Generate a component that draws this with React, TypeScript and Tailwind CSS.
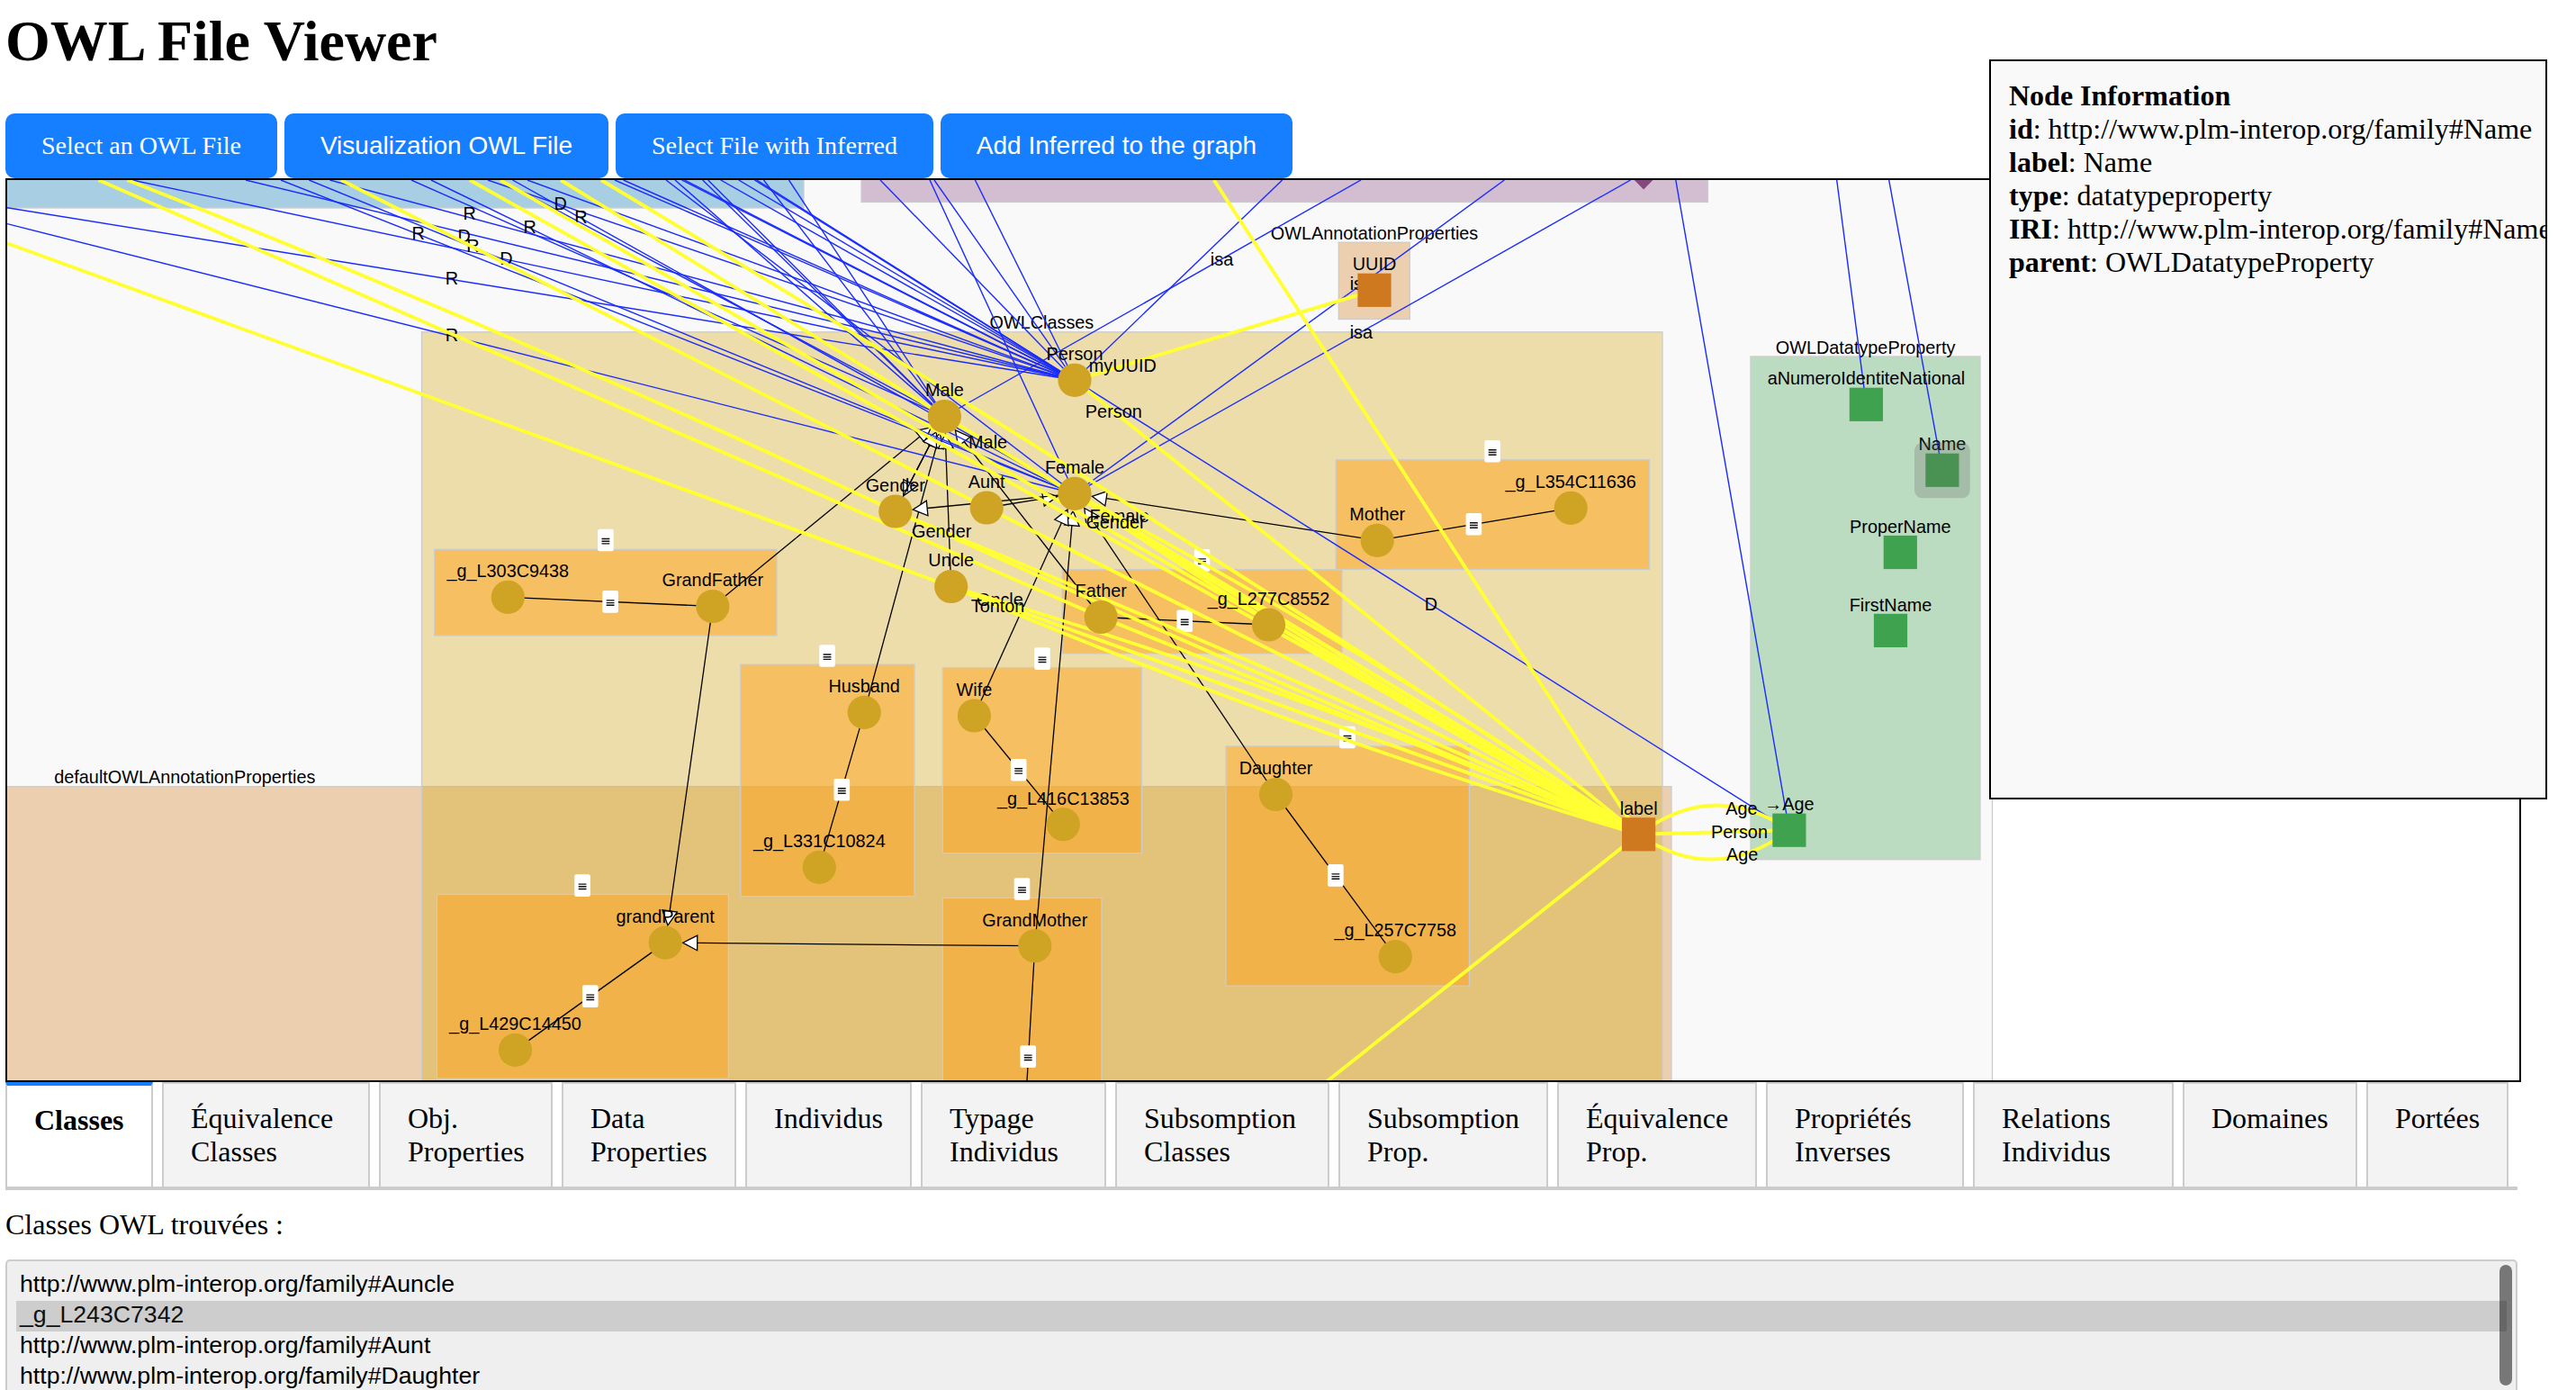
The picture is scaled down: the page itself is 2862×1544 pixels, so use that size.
import React from "react";

type P = [number, number];

const GOLD = "#cfa425";
const ORANGE = "#ce7820";
const GREEN = "#3fa24e";
const BLUE = "#1a2bff";
const YELLOW = "#ffff33";

const N: Record<string, P> = {
  g303: [564.3, 663.3],
  grandFather: [791.8, 673.5],
  person: [1194, 422.3],
  male: [1049.4, 462.5],
  female: [1194, 548.3],
  gender: [994.8, 568],
  aunt: [1096.2, 564],
  uncle: [1056.7, 651.5],
  father: [1223.2, 685.5],
  g277: [1409.5, 694],
  mother: [1530.2, 600.3],
  g354: [1745.2, 564.3],
  husband: [960.2, 791.4],
  g331: [910.3, 963.4],
  wife: [1082.4, 795],
  g416: [1181.3, 915.7],
  daughter: [1417.5, 882.5],
  g257: [1550.3, 1062.6],
  grandParent: [739.2, 1047.1],
  g429: [572.5, 1166.4],
  grandMother: [1149.8, 1050.7],
  uuid: [1527, 322.3],
  aNum: [2073.4, 449.3],
  name: [2157.9, 522.3],
  proper: [2111.3, 613.5],
  first: [2100.5, 700.4],
  age: [1987.9, 922.2],
  label: [1820.6, 926.8],
};

const circles: [string, string][] = [
  ["g303", "_g_L303C9438"],
  ["grandFather", "GrandFather"],
  ["person", "Person"],
  ["male", "Male"],
  ["female", "Female"],
  ["gender", "Gender"],
  ["aunt", "Aunt"],
  ["uncle", "Uncle"],
  ["father", "Father"],
  ["g277", "_g_L277C8552"],
  ["mother", "Mother"],
  ["g354", "_g_L354C11636"],
  ["husband", "Husband"],
  ["g331", "_g_L331C10824"],
  ["wife", "Wife"],
  ["g416", "_g_L416C13853"],
  ["daughter", "Daughter"],
  ["g257", "_g_L257C7758"],
  ["grandParent", "grandParent"],
  ["g429", "_g_L429C14450"],
  ["grandMother", "GrandMother"],
];

const squares: [string, string, string][] = [
  ["uuid", "UUID", ORANGE],
  ["label", "label", ORANGE],
  ["aNum", "aNumeroIdentiteNational", GREEN],
  ["name", "Name", GREEN],
  ["proper", "ProperName", GREEN],
  ["first", "FirstName", GREEN],
  ["age", "→Age", GREEN],
];

// x1, y1, x2, y2, fill, opacity
const groups: [number, number, number, number, string, number][] = [
  [-40, 100, 893, 231, "#0678b7", 0.333],
  [957, 100, 1897.5, 224.5, "#84477f", 0.333],
  [1487.3, 269.3, 1566.3, 354.5, "#d07a18", 0.333],
  [1945, 396, 2200, 954.8, GREEN, 0.333],
  [-40, 873.7, 1857, 1300, "#d07a18", 0.333],
  [468.5, 368.8, 1847, 1300, "#d3a817", 0.35],
  [482.7, 610.3, 863, 706, "#ffa41a", 0.5],
  [1180.2, 632.6, 1491, 726, "#ffa41a", 0.5],
  [1484.2, 510.8, 1832.6, 632.5, "#ffa41a", 0.5],
  [822.8, 738, 1016, 995.7, "#ffa41a", 0.5],
  [1047.3, 741.6, 1268.5, 947.7, "#ffa41a", 0.5],
  [485.4, 993.4, 809.4, 1198, "#ffa41a", 0.5],
  [1047.3, 997.3, 1224, 1300, "#ffa41a", 0.5],
  [1362, 828.9, 1632.5, 1095.2, "#ffa41a", 0.5],
];

const groupLabels: [number, number, string][] = [
  [1157.4, 365.2, "OWLClasses"],
  [2072.6, 392.5, "OWLDatatypeProperty"],
  [1527, 265.8, "OWLAnnotationProperties"],
  [205.3, 870.2, "defaultOWLAnnotationProperties"],
];

const groupBadges: P[] = [
  [672.9, 600], [1658.1, 501.3], [1335.5, 622.4], [919, 728.5],
  [1158, 731.6], [647.1, 983.6], [1135.5, 987.5], [1497, 819],
];

const edgeBadges: P[] = [
  [678.1, 668.4], [1637.4, 582.3], [1316.2, 689.8], [935.3, 877.3],
  [1131.7, 855.2], [655.8, 1106.6], [1142.2, 1173.6], [1483.9, 972.4],
];

const plain: [string, string][] = [
  ["g303", "grandFather"], ["mother", "g354"], ["father", "g277"], ["husband", "g331"],
  ["wife", "g416"], ["grandParent", "g429"], ["daughter", "g257"],
];

const arrows: [string, string][] = [
  ["grandFather", "male"], ["grandFather", "grandParent"], ["grandMother", "grandParent"],
  ["grandMother", "female"], ["husband", "male"], ["wife", "female"], ["father", "male"],
  ["daughter", "female"], ["mother", "female"], ["uncle", "male"], ["aunt", "female"],
  ["female", "gender"], ["male", "gender"], ["gender", "male"],
];

const blue: [number, number, string][] = [
  [8, 230.7, "person"], [8, 248.6, "female"], [147, 200, "person"], [273, 200, "person"],
  [312, 200, "female"], [343.4, 200, "female"], [366.5, 200, "person"], [457, 200, "male"],
  [479, 200, "female"], [542, 200, "person"], [556, 200, "male"], [569.5, 200, "female"],
  [586, 200, "person"], [683, 200, "person"], [692.7, 200, "person"], [740, 200, "female"],
  [750, 200, "male"], [757.5, 200, "person"], [760.5, 200, "person"], [780.7, 200, "male"],
  [786.7, 200, "male"], [800.7, 200, "person"], [820.7, 200, "person"], [838.3, 200, "person"],
  [840.7, 200, "person"], [848.5, 200, "male"], [876.5, 200, "male"], [978, 200, "person"],
  [1033, 200, "female"], [1038, 200, "person"], [1083.4, 200, "person"], [1512, 200, "male"],
  [1424.6, 200, "person"], [1671.4, 200, "female"], [1811.6, 200, "female"],
  [1861.8, 200, "age"], [2040.7, 200, "aNum"], [2098.7, 200, "name"], [1194, 422.3, "age"],
];

const blueLabels: [number, number, string][] = [
  [521.6, 243.8, "R"], [464.6, 266.2, "R"], [515.6, 268.5, "D"], [525.3, 280.2, "R"],
  [588.6, 259.2, "R"], [622.6, 232.8, "D"], [645.5, 247.5, "R"], [562.4, 294.2, "D"],
  [501.8, 316.2, "R"], [501.8, 379.2, "R"], [1589.9, 677.5, "D"], [1357.5, 294.5, "isa"],
  [1512.4, 321.8, "isa"], [1512.4, 375.5, "isa"],
];

// start, end, vertical bow of the control point
const yellowBack: [P, P, number][] = [
  [[8, 270.3], N.uncle, 0],
  [[109.5, 200], N.father, 0],
  [[141.5, 200], N.gender, -16],
  [[379, 200], N.aunt, 0],
  [[522, 200], N.label, 0],
  [[556, 200], N.label, 0],
  [[623, 200], N.male, 0],
  [[1348.7, 200], N.label, 0],
  [N.male, N.label, 0],
  [N.person, N.label, 0],
  [N.uuid, N.person, 0],
  [N.label, [1474.5, 1201], 0],
  [N.aunt, N.label, 0],
  [N.father, N.label, 0],
  [N.gender, N.label, -9],
  [N.gender, N.label, 9],
  [N.uncle, N.label, 25],
  [N.female, N.label, 0],
  [N.female, N.label, 12],
  [N.female, N.label, 25],
  [N.label, N.age, -60],
  [N.label, N.age, 0],
  [N.label, N.age, 60],
];

const yellowFront: [P, P, number][] = [
  [[668, 200], N.label, -18],
  [N.uncle, N.label, -25],
  [N.uncle, N.label, 0],
  [N.female, N.label, -25],
];

const yellowLabels: [number, number, string][] = [
  [1097.6, 497.8, "Male"], [1237.3, 463.8, "Person"], [1046.2, 597, "Gender"],
  [1243.6, 580.2, "Female"], [1110.9, 672.5, "Oncle"], [1247.3, 413, "myUUID"],
  [1932.5, 930.5, "Person"], [1934.9, 904.5, "Age"], [1935.7, 956.2, "Age"],
];

const lateLabels: [number, number, string][] = [
  [1239.5, 586.5, "Gender"], [1108.6, 679.8, "Tonton"],
];

function Texts({ items }: { items: [number, number, string][] }) {
  return (
    <>
      {items.map(([x, y, t], i) => (
        <text key={i} x={x} y={y} textAnchor="middle">{t}</text>
      ))}
    </>
  );
}

function Bows({ items }: { items: [P, P, number][] }) {
  return (
    <g fill="none" stroke={YELLOW} strokeWidth="3.9">
      {items.map(([a, b, o], i) => (
        <path key={i} d={`M${a[0]} ${a[1]}Q${(a[0] + b[0]) / 2} ${(a[1] + b[1]) / 2 + o} ${b[0]} ${b[1]}`} />
      ))}
    </g>
  );
}

function Badges({ items }: { items: P[] }) {
  return (
    <>
      {items.map(([x, y], i) => (
        <g key={i}>
          <rect x={x - 8.8} y={y - 12.3} width="17.6" height="24.6" rx="2" fill="#fff" />
          <path d={`M${x - 4.4} ${y - 1.5}h8.8M${x - 4.4} ${y + 1.2}h8.8M${x - 4.4} ${y + 3.9}h8.8`} stroke="#111" strokeWidth="1.4" />
        </g>
      ))}
    </>
  );
}

function Arrow({ from, to }: { from: P; to: P }) {
  const dx = to[0] - from[0];
  const dy = to[1] - from[1];
  const l = Math.hypot(dx, dy);
  const ux = dx / l;
  const uy = dy / l;
  const tx = to[0] - ux * 19.5;
  const ty = to[1] - uy * 19.5;
  const bx = tx - ux * 16;
  const by = ty - uy * 16;
  return (
    <g stroke="#000" strokeWidth="1.3">
      <line x1={from[0]} y1={from[1]} x2={bx} y2={by} />
      <path d={`M${tx} ${ty}L${bx - uy * 8.3} ${by + ux * 8.3}L${bx + uy * 8.3} ${by - ux * 8.3}Z`} fill="#fff" />
    </g>
  );
}

function Graph() {
  return (
    <svg className="block h-[1000px] w-[2791px]" viewBox="8 200 2791 1000" fontFamily='"Liberation Sans", Arial, sans-serif' fontSize="19.85" fill="#000">
      <rect x="8" y="200" width="2205" height="1000" fill="#f9f9f9" />
      <line x1="2213.5" y1="200" x2="2213.5" y2="1200" stroke="#ccc" strokeWidth="1.3" />
      {groups.map(([x1, y1, x2, y2, f, o], i) => (
        <rect key={i} x={x1} y={y1} width={x2 - x1} height={y2 - y1} fill={f} fillOpacity={o} stroke="#ccc" strokeWidth="1.3" />
      ))}
      <Texts items={groupLabels} />
      <Badges items={groupBadges} />
      <g stroke="#000" strokeWidth="1.3">
        {plain.map(([a, b], i) => (
          <line key={i} x1={N[a][0]} y1={N[a][1]} x2={N[b][0]} y2={N[b][1]} />
        ))}
        <line x1="1149.8" y1="1050.7" x2="1141" y2="1201" />
      </g>
      <Badges items={edgeBadges} />
      {arrows.map(([a, b], i) => (
        <Arrow key={i} from={N[a]} to={N[b]} />
      ))}
      <g stroke={BLUE} strokeWidth="1.4">
        {blue.map(([x, y, t], i) => (
          <line key={i} x1={x} y1={y} x2={N[t][0]} y2={N[t][1]} />
        ))}
      </g>
      <Texts items={blueLabels} />
      <Bows items={yellowBack} />
      <Texts items={yellowLabels} />
      <Bows items={yellowFront} />
      <Texts items={lateLabels} />
      <path d="M1815.8 200h20.6l-10.3 10.5z" fill="#84477f" />
      {circles.map(([k, t]) => (
        <g key={k}>
          <circle cx={N[k][0]} cy={N[k][1]} r="18.6" fill={GOLD} />
          <text x={N[k][0]} y={N[k][1] - 22.2} textAnchor="middle">{t}</text>
        </g>
      ))}
      {squares.map(([k, t, f]) => (
        <g key={k}>
          <rect x={N[k][0] - 18.6} y={N[k][1] - 18.6} width="37.2" height="37.2" fill={f} />
          <text x={N[k][0]} y={N[k][1] - 21.9} textAnchor="middle">{t}</text>
        </g>
      ))}
      <rect x="2127" y="491.5" width="61.8" height="61.8" rx="9" fill="#666" fillOpacity="0.27" />
    </svg>
  );
}

const tabs: [string, string, string][] = [
  ["Classes", "", "w-[164px]"],
  ["Équivalence", "Classes", "w-[231px]"],
  ["Obj.", "Properties", "w-[193px]"],
  ["Data", "Properties", "w-[194px]"],
  ["Individus", "", "w-[185px]"],
  ["Typage", "Individus", "w-[206px]"],
  ["Subsomption", "Classes", "w-[238px]"],
  ["Subsomption", "Prop.", "w-[233px]"],
  ["Équivalence", "Prop.", "w-[222px]"],
  ["Propriétés", "Inverses", "w-[220px]"],
  ["Relations", "Individus", "w-[223px]"],
  ["Domaines", "", "w-[194px]"],
  ["Portées", "", "w-[158px]"],
];

const buttons: [string, string][] = [
  ["Select an OWL File", "w-[302px]"],
  ["Visualization OWL File", "w-[360px] font-['Liberation_Sans',Arial,sans-serif]"],
  ["Select File with Inferred", "w-[353px]"],
  ["Add Inferred to the graph", "w-[391px] font-['Liberation_Sans',Arial,sans-serif]"],
];

const info: [string, string][] = [
  ["id", "http://www.plm-interop.org/family#Name"],
  ["label", "Name"],
  ["type", "datatypeproperty"],
  ["IRI", "http://www.plm-interop.org/family#Name"],
  ["parent", "OWLDatatypeProperty"],
];

const options = [
  "http://www.plm-interop.org/family#Auncle",
  "_g_L243C7342",
  "http://www.plm-interop.org/family#Aunt",
  "http://www.plm-interop.org/family#Daughter",
];

export default function App() {
  return (
    <div className="relative h-[1544px] w-[2862px] overflow-hidden bg-white pl-[6px] font-['Liberation_Serif','Times_New_Roman',serif] text-black">
      <h1 className="h-[126px] pt-[9px] text-[64px] leading-[74px] font-bold">OWL File Viewer</h1>
      <div className="flex h-[72px] gap-[8px]">
        {buttons.map(([t, c]) => (
          <button key={t} className={`h-[72px] rounded-[10px] bg-[#167fff] text-[28px] leading-[32px] whitespace-nowrap text-white ${c}`}>
            {t}
          </button>
        ))}
      </div>
      <div className="h-[1004px] w-[2795px] overflow-hidden border-2 border-black">
        <Graph />
      </div>
      <div className="flex h-[120px] w-[2791px] gap-[10px] border-b-4 border-[#ccc] text-[32px] leading-[37px]">
        {tabs.map(([a, b, w], i) => (
          <div
            key={i}
            className={`h-[116px] shrink-0 border-x-2 border-[#ccc] pt-[20px] pl-[30px] ${w} ${
              i === 0 ? "border-t-4 border-t-[#167fff] bg-white font-bold" : "border-t-2 bg-[#f3f3f3]"
            }`}
          >
            <div>{a}</div>
            <div>{b}</div>
          </div>
        ))}
      </div>
      <p className="mt-[20px] text-[32px] leading-[37px]">Classes OWL trouvées :</p>
      <div className="relative mt-[20px] h-[300px] w-[2791px] rounded-[5px] border-2 border-[#ccc] bg-[#efefef] px-[10px] pt-[10px] font-['Liberation_Sans',Arial,sans-serif] text-[26.667px] leading-[31px]">
        {options.map((o, i) => (
          <div key={o} className={`h-[34px] pl-[4px] ${i === 1 ? "bg-[#cdcdcd] text-[#101010]" : ""}`}>{o}</div>
        ))}
        <div className="absolute top-[4px] right-[4px] h-[134px] w-[14px] rounded-full bg-black/50" />
      </div>
      <div className="absolute top-[66px] left-[2210px] h-[822px] w-[620px] overflow-hidden border-2 border-black bg-[#f9f9f9] p-[20px] text-[32px] leading-[37px] whitespace-nowrap">
        <div className="font-bold">Node Information</div>
        {info.map(([k, v]) => (
          <div key={k}>
            <b>{k}</b>: {v}
          </div>
        ))}
      </div>
    </div>
  );
}
